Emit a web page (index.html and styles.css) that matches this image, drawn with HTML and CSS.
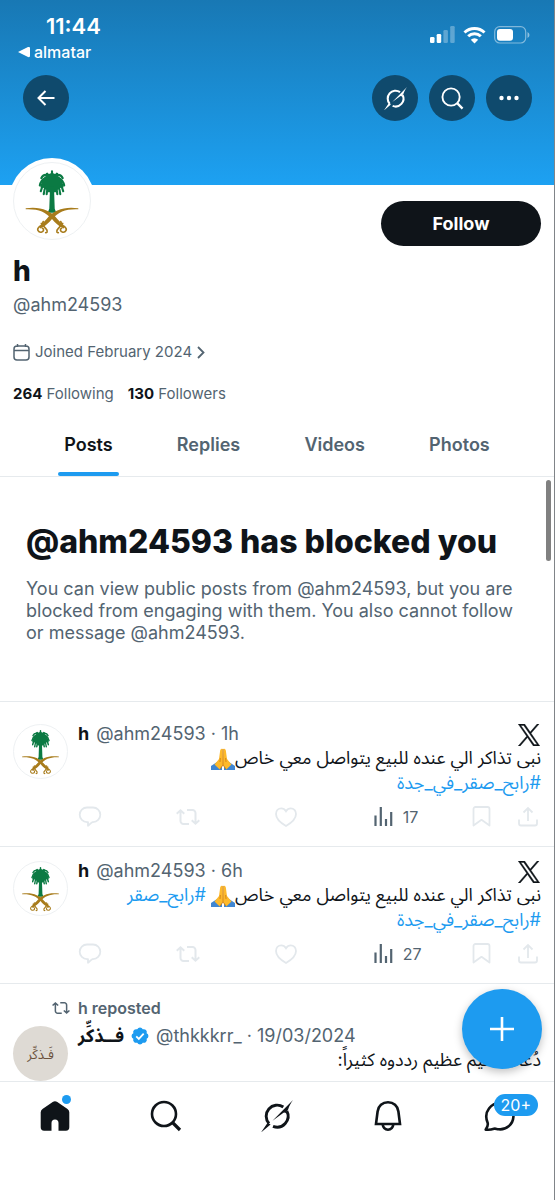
FILE: index.html
```html
<!DOCTYPE html>
<html lang="en">
<head>
    <meta charset="UTF-8">
    <meta name="viewport" content="width=device-width, initial-scale=1.0">
    <title>h (@ahm24593)</title>
    <link rel="stylesheet" href="styles.css">
</head>
<body>
    <!-- Shared icons -->
    <svg class="sprite" aria-hidden="true">
        <symbol id="emblem" viewBox="0 0 78 78">
            <g fill="none" stroke="#0b7a43" stroke-width="2.2" stroke-linecap="round">
                <path d="M39 17c-5-4-11-1-12.500 6M39 18c-6-1-10 4-11.500 11M39 19c-5 2-8 6-8.500 13M39 19c-3 3-5 7-5.500 13M39 17c5-4 11-1 12.500 6M39 18c6-1 10 4 11.500 11M39 19c5 2 8 6 8.500 13M39 19c3 3 5 7 5.500 13M39 16c-4-5-9-5-11-.5M39 16c4-5 9-5 11-.5M39 18V8.500M39 17l-5-6M39 17l5-6"/>
            </g>
            <path fill="#0b7a43" d="M29 17l5-5 5-2 5 2 5 5 2 8-5 1-3 4h-8l-3-4-5-1z"/>
            <path fill="#0b7a43" d="M37 24h4l.8 23 1.600 4h-8.800l1.600-4z"/>
            <path fill="#a87c1c" d="M12 46.500c13-2 25 1 32.500 11 4 4 6 6.500 8.500 7.500l-2 2.200c-5-2-9-6-12-9.700-7-7.500-14-10.500-27-10z"/>
            <path fill="#a87c1c" d="M66 46.500c-13-2-25 1-32.500 11-4 4-6 6.500-8.500 7.500l2 2.200c5-2 9-6 12-9.700 7-7.500 14-10.500 27-10z"/>
            <g fill="none" stroke="#a87c1c" stroke-width="1.600" stroke-linecap="round">
                <path d="M25.500 66c-2.500 2-.5 5.500 2.500 5s3-3.500 1-4M30 60c-2 3 .5 5 2.500 7s2 5 0 4.500M28 62l6 7M52.500 66c2.500 2 .5 5.500-2.500 5s-3-3.500-1-4M48 60c2 3-.5 5-2.500 7s-2 5 0 4.500M50 62l-6 7"/>
            </g>
        </symbol>
        <symbol id="grok" viewBox="0 0 32 32">
            <path d="M22.300 7A11 11 0 0 0 8 23.500M12 26.300A11 11 0 0 0 25.800 11" fill="none" stroke="currentColor" stroke-width="2.900"/>
            <path d="M32 0L11.500 20.800l11-8q1.300-1 1.800.5l2.800-3.800C28 6.500 29.500 3.500 32 0zM0 32.500l6.600-9.800 3 1.800z" fill="currentColor"/>
        </symbol>
        <symbol id="search" viewBox="0 0 32 32">
            <circle cx="14" cy="14" r="12" fill="none" stroke="currentColor" stroke-width="2.600"/>
            <path d="M22.500 22.500l7.500 7.500" fill="none" stroke="currentColor" stroke-width="3.200"/>
        </symbol>
        <symbol id="reply" viewBox="0 0 24 24">
            <path d="M9 2.500h6a7.300 7.300 0 0 1 0 14.600h-.5c-1.500.4-2.700 2.500-4.500 3.600v-3.600H9a7.300 7.300 0 0 1 0-14.600z" fill="none" stroke="currentColor" stroke-width="1.800" stroke-linejoin="round"/>
        </symbol>
        <symbol id="repost" viewBox="0 0 24 24">
            <path fill="currentColor" d="M4.500 3.880l4.432 4.140-1.364 1.460L5.500 7.550V16c0 1.100.896 2 2 2H13v2H7.500c-2.209 0-4-1.790-4-4V7.550L1.432 9.480.068 8.020 4.500 3.880zM16.500 6H11V4h5.500c2.209 0 4 1.790 4 4v8.450l2.068-1.930 1.364 1.460-4.432 4.140-4.432-4.140 1.364-1.460 2.068 1.930V8c0-1.100-.896-2-2-2z"/>
        </symbol>
        <symbol id="heart" viewBox="0 0 24 24">
            <path d="M12 21C5.500 17.200 2 13.300 2 9c0-3.400 2.300-5.700 5.200-5.700 2 0 3.600 1 4.800 2.900 1.200-1.900 2.800-2.900 4.800-2.900C19.700 3.300 22 5.600 22 9c0 4.300-3.500 8.200-10 12z" fill="none" stroke="currentColor" stroke-width="1.800"/>
        </symbol>
        <symbol id="views" viewBox="0 0 24 24">
            <path d="M2.500 10.500v10.500M7.800 2v19M13 14v7M18.200 7v14" fill="none" stroke="currentColor" stroke-width="2.200"/>
        </symbol>
        <symbol id="bookmark" viewBox="0 0 24 24">
            <path d="M2.500 4a2 2 0 0 1 2-2h12a2 2 0 0 1 2 2v16.500l-8-5.700-8 5.700z" fill="none" stroke="currentColor" stroke-width="1.800" stroke-linejoin="round"/>
        </symbol>
        <symbol id="share" viewBox="0 0 24 24">
            <path d="M11 16V3M6.500 7.500L11 3l4.500 4.500M2 14.500v4a2 2 0 0 0 2 2h14a2 2 0 0 0 2-2v-4" fill="none" stroke="currentColor" stroke-width="1.800"/>
        </symbol>
        <symbol id="x-logo" viewBox="0 0 1200 1227">
            <path fill="currentColor" stroke="currentColor" stroke-width="24" d="M714.163 519.284L1160.890 0H1055.030L667.137 450.887L357.328 0H0L468.492 681.821L0 1226.370H105.866L515.491 750.218L842.672 1226.370H1200L714.137 519.284H714.163ZM569.165 687.828L521.697 619.934L144.011 79.694H306.615L611.412 515.685L658.880 583.579L1055.080 1150.300H892.476L569.165 687.854V687.828Z"/>
        </symbol>
        <symbol id="pray" viewBox="0 0 24 24">
            <path fill="#3f86d2" d="M0 19l6-4 5 4v4H0zM24 19l-6-4-5 4v4h11z"/>
            <path fill="#fdb92b" d="M11.700 2c-1.500-.8-2.400.2-2.600 2L8 12l-4.500 5.500 5.200 5 3.300-4.500zM12.300 2c1.500-.8 2.400.2 2.600 2L16 12l4.500 5.500-5.200 5L12 18z"/>
            <path fill="none" stroke="#c97a12" stroke-width=".8" d="M12 2v16l-3 4M12 18l3 4M9.300 11l-.3 4M14.700 11l.3 4"/>
        </symbol>
    </svg>

    <div class="app">
        <header class="banner">
            <div class="status-bar">
                <div class="status-left">
                    <span class="time">11:44</span>
                    <a class="back-app" href="#">
                        <svg width="12" height="12" viewBox="0 0 12 12" aria-hidden="true"><path d="M0 6l10-5q2-.5 2 1v8q0 1.500-2 1z" fill="#fff"/></svg>
                        almatar
                    </a>
                </div>
                <div class="status-right">
                    <svg width="25" height="18" viewBox="0 0 25 18" aria-hidden="true">
                        <g fill="#fff">
                            <rect x="0" y="11" width="4.500" height="6" rx="1.300"/>
                            <rect x="6.700" y="8" width="4.500" height="9" rx="1.300"/>
                            <rect x="13.400" y="4" width="4.500" height="13" rx="1.300" opacity=".3"/>
                            <rect x="20.200" y="0" width="4.500" height="17" rx="1.300" opacity=".3"/>
                        </g>
                    </svg>
                    <svg width="23" height="18" viewBox="0 0 23 18" aria-hidden="true">
                        <path d="M1.500 6.500a14.500 14.500 0 0 1 20 0M5.200 10.300a9 9 0 0 1 12.600 0" fill="none" stroke="#fff" stroke-width="3"/>
                        <path d="M11.500 17.500l-3.700-3.700a5.200 5.200 0 0 1 7.400 0z" fill="#fff"/>
                    </svg>
                    <svg width="36" height="18" viewBox="0 0 36 18" aria-hidden="true">
                        <rect x=".7" y=".7" width="31" height="16.300" rx="5" fill="none" stroke="#fff" stroke-opacity=".45" stroke-width="1.200"/>
                        <rect x="3" y="3" width="16" height="11.700" rx="3" fill="#fff"/>
                        <path d="M33.500 6v6q2-.8 2-3t-2-3z" fill="#fff" opacity=".5"/>
                    </svg>
                </div>
            </div>
            <div class="toolbar">
                <button class="round-btn back" type="button" aria-label="Back">
                    <svg width="18" height="16" viewBox="0 0 18 16"><path d="M17.500 8H2M8.500 1L1.500 8l7 7" fill="none" stroke="#fff" stroke-width="2"/></svg>
                </button>
                <button class="round-btn" type="button" aria-label="Grok"><svg width="23" height="23"><use href="#grok"/></svg></button>
                <button class="round-btn" type="button" aria-label="Search"><svg width="23" height="23"><use href="#search"/></svg></button>
                <button class="round-btn" type="button" aria-label="More">
                    <svg width="20" height="6" viewBox="0 0 20 6"><g fill="#fff"><circle cx="2.500" cy="3" r="2.200"/><circle cx="10" cy="3" r="2.200"/><circle cx="17.500" cy="3" r="2.200"/></g></svg>
                </button>
            </div>
        </header>

        <main>
            <section class="profile">
                <div class="profile-top">
                    <div class="profile-avatar">
                        <svg class="avatar" role="img" aria-label="Profile picture"><use href="#emblem"/></svg>
                    </div>
                    <button class="follow" type="button">Follow</button>
                </div>
                <h1>h</h1>
                <p class="handle">@ahm24593</p>
                <a class="joined" href="#">
                    <svg width="17" height="17" viewBox="0 0 17 17" aria-hidden="true"><path d="M1 5a3 3 0 0 1 3-3h9a3 3 0 0 1 3 3v8a3 3 0 0 1-3 3H4a3 3 0 0 1-3-3zM1 6.500h15M4.500 0v3M12.500 0v3" fill="none" stroke="currentColor" stroke-width="1.500"/></svg>
                    <span>Joined February 2024</span>
                    <svg width="8" height="13" viewBox="0 0 8 13" aria-hidden="true"><path d="M1 1l5.500 5.500L1 12" fill="none" stroke="currentColor" stroke-width="1.800"/></svg>
                </a>
                <div class="counts">
                    <a href="#"><b>264</b> Following</a>
                    <a href="#"><b>130</b> Followers</a>
                </div>
            </section>

            <nav class="tabs" aria-label="Profile sections">
                <a class="active" href="#">Posts</a>
                <a href="#">Replies</a>
                <a href="#">Videos</a>
                <a href="#">Photos</a>
            </nav>

            <section class="blocked">
                <span class="scroll-thumb"></span>
                <h2>@ahm24593 has blocked you</h2>
                <p>You can view public posts from @ahm24593, but you are blocked from engaging with them. You also cannot follow or message @ahm24593.</p>
            </section>

            <section class="feed">
                <article class="post">
                    <svg class="avatar" role="img" aria-label="h"><use href="#emblem"/></svg>
                    <div class="post-body">
                        <div class="post-head"><b>h</b><span>@ahm24593 · 1h</span><svg class="x-logo" aria-hidden="true"><use href="#x-logo"/></svg></div>
                        <p class="post-text" dir="rtl" lang="ar">نبى تذاكر الي عنده للبيع يتواصل معي خاص<svg class="emoji" role="img" aria-label="🙏"><use href="#pray"/></svg><br><a href="#">#رابح_صقر_في_جدة</a></p>
                        <div class="actions">
                            <button type="button" aria-label="Reply"><svg><use href="#reply"/></svg></button>
                            <button type="button" aria-label="Repost"><svg><use href="#repost"/></svg></button>
                            <button type="button" aria-label="Like"><svg><use href="#heart"/></svg></button>
                            <button class="views" type="button"><svg aria-hidden="true"><use href="#views"/></svg>17</button>
                            <button type="button" aria-label="Bookmark"><svg><use href="#bookmark"/></svg></button>
                            <button type="button" aria-label="Share"><svg><use href="#share"/></svg></button>
                        </div>
                    </div>
                </article>

                <article class="post">
                    <svg class="avatar" role="img" aria-label="h"><use href="#emblem"/></svg>
                    <div class="post-body">
                        <div class="post-head"><b>h</b><span>@ahm24593 · 6h</span><svg class="x-logo" aria-hidden="true"><use href="#x-logo"/></svg></div>
                        <p class="post-text" dir="rtl" lang="ar">نبى تذاكر الي عنده للبيع يتواصل معي خاص<svg class="emoji" role="img" aria-label="🙏"><use href="#pray"/></svg> <a href="#">#رابح_صقر</a><br><a href="#">#رابح_صقر_في_جدة</a></p>
                        <div class="actions">
                            <button type="button" aria-label="Reply"><svg><use href="#reply"/></svg></button>
                            <button type="button" aria-label="Repost"><svg><use href="#repost"/></svg></button>
                            <button type="button" aria-label="Like"><svg><use href="#heart"/></svg></button>
                            <button class="views" type="button"><svg aria-hidden="true"><use href="#views"/></svg>27</button>
                            <button type="button" aria-label="Bookmark"><svg><use href="#bookmark"/></svg></button>
                            <button type="button" aria-label="Share"><svg><use href="#share"/></svg></button>
                        </div>
                    </div>
                </article>

                <article class="post">
                    <div class="reposted"><svg aria-hidden="true"><use href="#repost"/></svg>h reposted</div>
                    <div class="avatar avatar-text" lang="ar">فَـذكِّر</div>
                    <div class="post-body">
                        <div class="post-head">
                            <b lang="ar">فــذكِّر</b>
                            <svg width="18" height="18" viewBox="1 1 20 20" role="img" aria-label="Verified"><path fill="#1d9bf0" d="M20.396 11a3.487 3.487 0 0 0-2.008-3.062 3.474 3.474 0 0 0-.742-3.584 3.474 3.474 0 0 0-3.584-.742A3.468 3.468 0 0 0 11 1.604a3.463 3.463 0 0 0-3.053 2.008 3.472 3.472 0 0 0-3.593.742 3.465 3.465 0 0 0-.742 3.584A3.482 3.482 0 0 0 1.604 11a3.482 3.482 0 0 0 2.008 3.062 3.465 3.465 0 0 0 .742 3.584 3.472 3.472 0 0 0 3.593.742A3.463 3.463 0 0 0 11 20.396a3.468 3.468 0 0 0 3.062-2.008 3.474 3.474 0 0 0 3.584-.742 3.474 3.474 0 0 0 .742-3.584A3.487 3.487 0 0 0 20.396 11z"/><path d="M6.800 11.300l2.900 2.900 5.400-5.900" fill="none" stroke="#fff" stroke-width="2"/></svg>
                            <span>@thkkkrr_ · 19/03/2024</span>
                        </div>
                        <p class="post-text" dir="rtl" lang="ar">دُعاءٌ عظيم عظيم رددوه كثيراً:</p>
                    </div>
                </article>
            </section>

            <button class="compose" type="button" aria-label="New post">
                <svg width="24" height="24" viewBox="0 0 24 24"><path d="M12 0v24M0 12h24" fill="none" stroke="#fff" stroke-width="2.600"/></svg>
            </button>
        </main>

        <nav class="bottom-bar" aria-label="Main">
            <a href="#" aria-label="Home">
                <svg viewBox="0 0 32 32"><path fill="currentColor" d="M13.700 2q2.300-1.500 4.600 0l10.200 7q1.800 1.200 1.800 3.300v15q0 3.400-3.400 3.400H19.500V23q0-3.500-3.500-3.500T12.500 23v7.700H5.100q-3.400 0-3.400-3.400v-15Q1.700 10.200 3.500 9z"/></svg>
                <span class="dot"></span>
            </a>
            <a href="#" aria-label="Search"><svg><use href="#search"/></svg></a>
            <a href="#" aria-label="Grok"><svg><use href="#grok"/></svg></a>
            <a href="#" aria-label="Notifications">
                <svg viewBox="0 0 32 32"><path d="M4 24l1.600-12.500C6.200 6 10.500 2.300 16 2.300S25.800 6 26.400 11.500L28 24zM10.500 24q1 5.700 5.500 5.700t5.500-5.700" fill="none" stroke="currentColor" stroke-width="2.600"/></svg>
            </a>
            <a href="#" aria-label="Messages">
                <svg viewBox="0 0 32 32"><path d="M17 2.800a13.300 13.300 0 1 1-1.500 26.500c-2-.2-3-1-4.500-.5-2.500.8-5 1.200-8.300.8 1.500-2 2.500-4 2-6.500C3 19 2.500 13 6 8.500 8.500 5 12 3 17 2.800z" fill="none" stroke="currentColor" stroke-width="2.600" stroke-linejoin="round"/></svg>
                <span class="badge">20+</span>
            </a>
        </nav>
    </div>
</body>
</html>
```

FILE: styles.css
```css
* {
    box-sizing: border-box;
}

body {
    margin: 0;
    font-family: Inter, "Noto Sans Arabic", "DejaVu Sans", sans-serif;
    font-size: 18px;
    line-height: 24px;
    color: #0f1419;
    background: #fff;
}

h1, h2, p {
    margin: 0;
}

a {
    color: inherit;
    text-decoration: none;
}

button {
    padding: 0;
    border: none;
    background: none;
    font: inherit;
    color: inherit;
    cursor: pointer;
}

svg {
    flex-shrink: 0;
}

.sprite {
    position: absolute;
    width: 0;
    height: 0;
}

.app {
    display: flex;
    flex-direction: column;
    height: 100vh;
    border-right: 1px solid #808488;
}

/* Banner */
.banner {
    flex-shrink: 0;
    padding: 12px 22px 64px 23px;
    color: #fff;
    background: linear-gradient(#1878b4, #1da1f2);
}

.status-bar {
    display: flex;
    justify-content: space-between;
    align-items: center;
}

.status-left {
    display: flex;
    flex-direction: column;
    margin-left: -5px;
}

.time {
    padding-left: 28px;
    font-size: 22px;
    line-height: 28px;
    font-weight: 600;
}

.back-app {
    display: flex;
    align-items: center;
    gap: 4px;
    font-size: 16px;
    font-weight: 500;
}

.status-right {
    display: flex;
    gap: 8px;
    padding-right: 2px;
    margin-top: -6px;
}

.toolbar {
    display: flex;
    gap: 11px;
    margin-top: 11px;
}

.round-btn {
    display: flex;
    align-items: center;
    justify-content: center;
    width: 46px;
    height: 46px;
    border-radius: 50%;
    background: #0f4a6d;
    color: #fff;
}

.back {
    margin-right: auto;
}

/* Profile */
main {
    position: relative;
    flex: 1;
    min-height: 0;
}

.profile {
    padding: 0 13px;
    color: #536471;
}

.profile-top {
    display: flex;
    justify-content: space-between;
    align-items: flex-start;
}

.profile-avatar {
    margin: -27px 0 0 -4px;
    padding: 4px;
    border-radius: 50%;
    background: #fff;
}

.profile-avatar .avatar {
    display: block;
    width: 78px;
    height: 78px;
    margin: 0;
}

.follow {
    width: 160px;
    height: 45px;
    margin-top: 16px;
    border-radius: 23px;
    background: #0f1419;
    color: #fff;
    font-weight: 700;
}

.profile h1 {
    margin-top: 8px;
    font-size: 28px;
    line-height: 34px;
    font-weight: 800;
    color: #0f1419;
}

.handle {
    margin-top: 5px;
}

.joined {
    display: flex;
    align-items: center;
    gap: 5px;
    margin-top: 23px;
    font-size: 15px;
}

.counts {
    display: flex;
    gap: 14px;
    margin-top: 18px;
    font-size: 15px;
}

.counts b {
    color: #0f1419;
}

.tabs {
    display: flex;
    justify-content: space-evenly;
    height: 71px;
    border-bottom: 1px solid #e6eaed;
    font-weight: 600;
    color: #536471;
}

.tabs a {
    position: relative;
    padding-top: 27px;
}

.tabs .active {
    color: #0f1419;
}

.tabs .active::after {
    content: "";
    position: absolute;
    left: -6px;
    right: -6px;
    bottom: 0;
    height: 4px;
    border-radius: 2px;
    background: #1d9bf0;
}

/* Blocked notice */
.blocked {
    position: relative;
    padding: 45px 26px 57px;
    border-bottom: 1px solid #e6eaed;
}

.blocked h2 {
    font-size: 32px;
    line-height: 40px;
    font-weight: 800;
}

.blocked p {
    margin-top: 16px;
    line-height: 22px;
    color: #536471;
}

.scroll-thumb {
    position: absolute;
    top: 3px;
    right: 3px;
    width: 5px;
    height: 81px;
    border-radius: 3px;
    background: #808080;
}

/* Posts */
.feed {
    padding-top: 8px;
}

.post {
    display: flex;
    flex-wrap: wrap;
    gap: 0 10px;
    padding: 12px 13px 17px;
    border-bottom: 1px solid #e6eaed;
}

.post:last-child {
    padding-bottom: 0;
    border-bottom: none;
}

.avatar {
    width: 55px;
    height: 55px;
    margin-top: 2px;
    border: 1px solid #eef1f3;
    border-radius: 50%;
}

.avatar-text {
    display: flex;
    align-items: center;
    justify-content: center;
    border: none;
    background: #dedad4;
    color: #6b513c;
    font-size: 13px;
}

.post-body {
    flex: 1;
    min-width: 0;
}

.post-head {
    display: flex;
    align-items: center;
    gap: 7px;
    color: #536471;
}

.post-head b {
    color: #0f1419;
}

.x-logo {
    width: 24px;
    height: 22px;
    margin-left: auto;
    align-self: flex-end;
    color: #0f1419;
}

.post-text a {
    color: #1d9bf0;
}

.emoji {
    width: 24px;
    height: 24px;
    vertical-align: middle;
}

.actions {
    display: grid;
    grid-template-columns: 98fr 98fr 98fr 98fr 46fr 24px;
    margin-top: 10px;
    color: #e3e8ec;
}

.actions button {
    display: flex;
    align-items: center;
    gap: 6px;
}

.actions svg {
    width: 24px;
    height: 24px;
}

.actions .views {
    color: #536471;
    font-size: 16px;
}

.reposted {
    display: flex;
    align-items: center;
    gap: 8px;
    width: 100%;
    margin-bottom: 4px;
    padding-left: 39px;
    font-size: 16px;
    font-weight: 600;
    color: #536471;
}

.reposted svg {
    width: 18px;
    height: 18px;
}

.compose {
    position: absolute;
    right: 12px;
    bottom: 12px;
    display: flex;
    align-items: center;
    justify-content: center;
    width: 80px;
    height: 80px;
    border-radius: 50%;
    background: #1d9bf0;
    box-shadow: 0 3px 8px rgba(0, 0, 0, 0.25);
}

/* Bottom navigation */
.bottom-bar {
    position: relative;
    display: grid;
    grid-template-columns: repeat(5, 1fr);
    flex-shrink: 0;
    padding: 18px 0 68px;
    border-top: 1px solid #e6eaed;
    background: #fff;
}

.bottom-bar a {
    position: relative;
    display: flex;
    justify-content: center;
}

.bottom-bar svg {
    width: 32px;
    height: 32px;
}

.dot {
    position: absolute;
    top: -5px;
    left: calc(50% + 7px);
    width: 9px;
    height: 9px;
    border-radius: 50%;
    background: #1d9bf0;
}

.badge {
    position: absolute;
    top: -6px;
    left: calc(50% - 5px);
    padding: 0 7px;
    border-radius: 11px;
    background: #1d9bf0;
    color: #fff;
    font-size: 16px;
    line-height: 22px;
}
```
